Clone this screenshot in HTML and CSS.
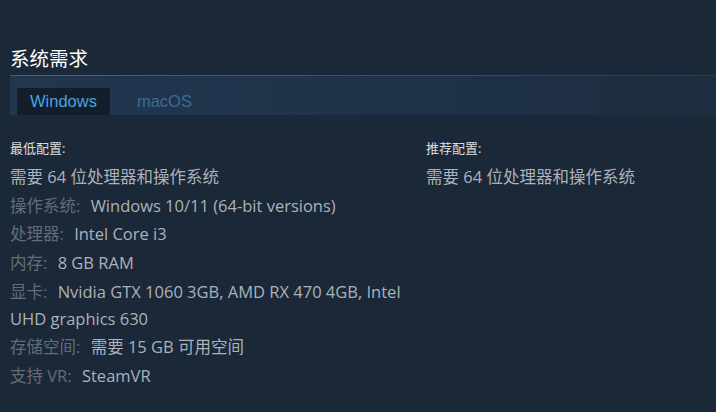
FILE: index.html
```html
<!DOCTYPE html>
<html lang="zh-CN">
<head>
<meta charset="utf-8">
<title>系统需求</title>
<link rel="stylesheet" href="styles.css">
</head>
<body>
<section class="sysreq">
  <h2 class="title">系统需求</h2>
  <div class="tabs">
    <div class="tab active">Windows</div>
    <div class="tab">macOS</div>
  </div>
  <div class="cols">
    <div class="col">
      <div class="col-head">最低配置:</div>
      <ul class="reqs">
        <li>需要 64 位处理器和操作系统</li>
        <li><span class="lbl">操作系统:</span> Windows 10/11 (64-bit versions)</li>
        <li><span class="lbl">处理器:</span> Intel Core i3</li>
        <li><span class="lbl">内存:</span> 8 GB RAM</li>
        <li><span class="lbl">显卡:</span> Nvidia GTX 1060 3GB, AMD RX 470 4GB, Intel UHD graphics 630</li>
        <li><span class="lbl">存储空间:</span> 需要 15 GB 可用空间</li>
        <li><span class="lbl">支持 VR:</span> SteamVR</li>
      </ul>
    </div>
    <div class="col">
      <div class="col-head">推荐配置:</div>
      <ul class="reqs">
        <li>需要 64 位处理器和操作系统</li>
      </ul>
    </div>
  </div>
</section>
</body>
</html>
```
FILE: styles.css
```css
html, body {
  margin: 0;
  padding: 0;
  background: #1b2838;
  height: 100%;
}
body {
  font-family: "Open Sans", "Noto Sans CJK SC", sans-serif;
  color: #acb2b8;
}
.sysreq {
  padding: 47px 0 0 10px;
}
.title {
  margin: 0;
  font-family: "Liberation Sans", "Noto Sans CJK SC", sans-serif;
  font-weight: normal;
  font-size: 19.5px;
  line-height: 24px;
  color: #ffffff;
  padding-bottom: 4px;
}
.tabs {
  display: flex;
  padding-top: 13px;
  background:
    linear-gradient(to right, #2d6c92 0%, #285a7a 50%, #1f3d55 100%) top left / 100% 1px no-repeat,
    linear-gradient(to right, #223650 0%, #1f3249 55%, #1d2d40 100%);
}
.tab {
  margin: 0 7px;
  padding: 0 13px;
  height: 27px;
  line-height: 27px;
  font-family: "Liberation Sans", Arial, sans-serif;
  font-size: 16.5px;
  color: #3d6c8e;
}
.tab.active {
  background: #141e2b;
  color: #47a3e3;
}
.cols {
  display: grid;
  grid-template-columns: 406px 1fr;
  column-gap: 10px;
  padding-top: 24px;
}
.col-head {
  font-size: 13px;
  line-height: 18px;
  color: #dcdedf;
  margin-bottom: 6px;
}
.reqs {
  list-style: none;
  margin: 0;
  padding: 0;
}
.reqs li {
  font-size: 16.5px;
  line-height: 27px;
  margin-bottom: 1.7px;
}
.lbl {
  color: #636d79;
  margin-right: 6px;
}
```
